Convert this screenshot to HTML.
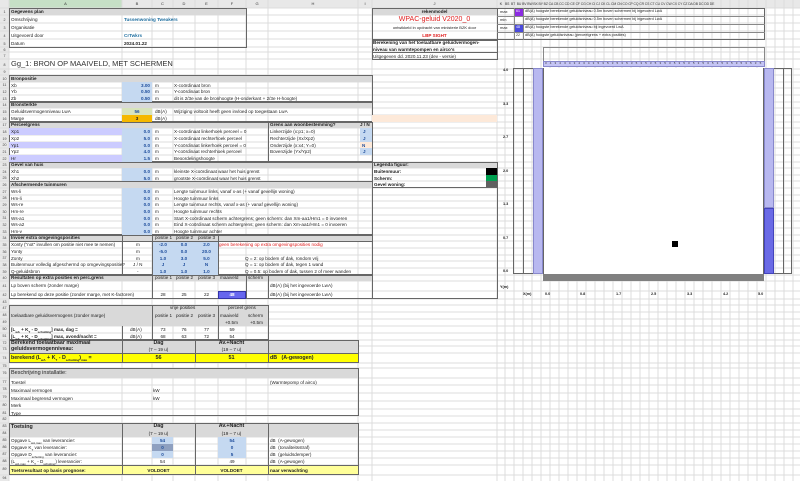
<!DOCTYPE html>
<html><head><meta charset="utf-8"><style>
*{margin:0;padding:0;box-sizing:border-box}
body{width:800px;height:481px;overflow:hidden;background:#fff;font-family:"Liberation Sans",sans-serif;font-size:4.6px;color:#222;position:relative}
i,b,u{position:absolute;font-style:normal;white-space:nowrap;text-decoration:none;line-height:7px;height:7px}
b{font-weight:bold}
.d{position:absolute}
.hd{background:#d9d9d9}
.bl{background:#c5d9f1}
.v{color:#1f4e9c;font-weight:bold;text-align:right}
.bx{position:absolute;border:1px solid #666}
.rn{position:absolute;left:0;width:9px;text-align:center;font-size:3.6px;color:#444;line-height:6px}
.ch{position:absolute;top:0;height:8px;line-height:8px;font-size:4px;text-align:center;color:#333}
</style></head><body>
<svg width="800" height="481" style="position:absolute;left:0;top:0" shape-rendering="crispEdges">
<rect x="0" y="0" width="800" height="8" fill="#e8e8e8"/>
<rect x="0" y="0" width="9" height="481" fill="#e8e8e8"/>
<rect x="9" y="0" width="113" height="8" fill="#c6e0c6"/>
<g stroke="#dcdcdc" stroke-width="1">
<path d="M0 8H800M0 15H800M0 23H800M0 31H800M0 39H800M0 47H800M0 52H800M0 59H800M0 69H800M0 75H800M0 82H800M0 88H800M0 95H800M0 102H800M0 108H800M0 115H800M0 122H800M0 128H800M0 135H800M0 142H800M0 148H800M0 155H800M0 162H800M0 168H800M0 175H800M0 181H800M0 188H800M0 195H800M0 201H800M0 208H800M0 215H800M0 221H800M0 228H800M0 235H800M0 241H800M0 248H800M0 255H800M0 261H800M0 268H800M0 275H800M0 281H800M0 291H800M0 299H800M0 305H800M0 312H800M0 319H800M0 326H800M0 333H800M0 340H800M0 346H800M0 353H800M0 363H800M0 368H800M0 378H800M0 385H800M0 393H800M0 401H800M0 409H800M0 416H800M0 423H800M0 430H800M0 437H800M0 444H800M0 451H800M0 458H800M0 465H800M0 475H800"/>
<path d="M9 0V481M122 0V481M152 0V481M173 0V481M195 0V481M218 0V481M246 0V481M268 0V481M358 0V481M372 0V481M497 0V481M505 0V481M514 0V481M523 0V481M532 0V481M541 0V481M550 0V481M559 0V481M568 0V481M577 0V481M586 0V481M595 0V481M604 0V481M613 0V481M622 0V481M631 0V481M640 0V481M649 0V481M658 0V481M667 0V481M676 0V481M685 0V481M694 0V481M703 0V481M712 0V481M721 0V481M730 0V481M739 0V481M748 0V481M757 0V481M766 0V481M775 0V481M784 0V481M793 0V481"/>
</g>
</svg>
<!-- column headers -->
<span class="ch" style="left:9px;width:113px">A</span><span class="ch" style="left:122px;width:30px">B</span><span class="ch" style="left:152px;width:21px">C</span><span class="ch" style="left:173px;width:22px">D</span><span class="ch" style="left:195px;width:23px">E</span><span class="ch" style="left:218px;width:28px">F</span><span class="ch" style="left:246px;width:22px">G</span><span class="ch" style="left:268px;width:90px">H</span><span class="ch" style="left:358px;width:14px">I</span><span class="ch" style="left:372px;width:125px">J</span><span class="ch" style="left:497px;width:8px">K</span>
<span class="ch" style="left:505px;width:295px;text-align:left;font-size:3.4px;letter-spacing:-0.1px">BS &nbsp;BT &nbsp;BU BV BW BX BY BZ CA CB CC CD CE CF CG CH CI CJ CK CL CM CN CO CP CQ CR CS CT CU CV CW CX CY CZ DA DB DC DD DE</span>
<!-- row numbers -->
<span class="rn" style="top:9px">1</span><span class="rn" style="top:17px">2</span><span class="rn" style="top:25px">3</span><span class="rn" style="top:33px">4</span><span class="rn" style="top:41px">5</span><span class="rn" style="top:47px">6</span><span class="rn" style="top:53px">7</span><span class="rn" style="top:62px">8</span><span class="rn" style="top:69px">9</span><span class="rn" style="top:76px">10</span><span class="rn" style="top:82px">11</span><span class="rn" style="top:89px">12</span><span class="rn" style="top:96px">13</span><span class="rn" style="top:102px">14</span><span class="rn" style="top:109px">15</span><span class="rn" style="top:116px">16</span><span class="rn" style="top:122px">17</span><span class="rn" style="top:129px">18</span><span class="rn" style="top:136px">19</span><span class="rn" style="top:142px">20</span><span class="rn" style="top:149px">21</span><span class="rn" style="top:156px">22</span><span class="rn" style="top:162px">23</span><span class="rn" style="top:169px">24</span><span class="rn" style="top:175px">25</span><span class="rn" style="top:182px">26</span><span class="rn" style="top:189px">27</span><span class="rn" style="top:195px">28</span><span class="rn" style="top:202px">29</span><span class="rn" style="top:209px">30</span><span class="rn" style="top:215px">31</span><span class="rn" style="top:222px">32</span><span class="rn" style="top:229px">33</span><span class="rn" style="top:235px">34</span><span class="rn" style="top:242px">35</span><span class="rn" style="top:249px">36</span><span class="rn" style="top:255px">37</span><span class="rn" style="top:262px">38</span><span class="rn" style="top:269px">39</span><span class="rn" style="top:275px">40</span><span class="rn" style="top:283px">41</span><span class="rn" style="top:292px">42</span><span class="rn" style="top:299px">43</span><span class="rn" style="top:305px">47</span><span class="rn" style="top:312px">48</span><span class="rn" style="top:319px">49</span><span class="rn" style="top:326px">50</span><span class="rn" style="top:333px">51</span><span class="rn" style="top:340px">72</span><span class="rn" style="top:346px">73</span><span class="rn" style="top:355px">74</span><span class="rn" style="top:363px">75</span><span class="rn" style="top:370px">76</span><span class="rn" style="top:379px">77</span><span class="rn" style="top:386px">78</span><span class="rn" style="top:394px">79</span><span class="rn" style="top:402px">80</span><span class="rn" style="top:410px">81</span><span class="rn" style="top:416px">82</span><span class="rn" style="top:423px">83</span><span class="rn" style="top:430px">84</span><span class="rn" style="top:437px">85</span><span class="rn" style="top:444px">86</span><span class="rn" style="top:451px">87</span><span class="rn" style="top:458px">88</span><span class="rn" style="top:466px">89</span><span class="rn" style="top:475px">94</span>

<!-- Gegevens plan -->
<div class="d hd" style="left:9px;top:8px;width:237px;height:7px"></div>
<div class="bx" style="left:9px;top:8px;width:238px;height:40px"></div>
<b style="left:11px;top:8px">Gegevens plan</b>
<i style="left:11px;top:16px">Omschrijving</i><b style="left:124px;top:16px;color:#1f6fa0">Tussenwoning Tweakers</b>
<i style="left:11px;top:24px">Organisatie</i>
<i style="left:11px;top:32px">Uitgevoerd door</i><b style="left:124px;top:32px;color:#1f6fa0">CrTwkrs</b>
<i style="left:11px;top:40px">Datum</i><b style="left:124px;top:40px">2024.01.22</b>
<i style="left:11px;top:59px;height:10px;line-height:10px;font-size:7.5px;color:#333">Gg_1: BRON OP MAAIVELD, MET SCHERMEN</i>

<!-- Bronpositie -->
<div class="d hd" style="left:9px;top:75px;width:363px;height:7px"></div>
<div class="bx" style="left:9px;top:75px;width:364px;height:27px"></div>
<b style="left:11px;top:75px">Bronpositie</b>
<div class="d bl" style="left:122px;top:82px;width:30px;height:20px"></div>
<i style="left:11px;top:82px">Xb</i><b class="v" style="left:122px;width:28px;top:82px">3.00</b><i style="left:155px;top:82px">m</i><i style="left:174px;top:82px">X-coördinaat bron</i>
<i style="left:11px;top:88px">Yb</i><b class="v" style="left:122px;width:28px;top:88px">0.50</b><i style="left:155px;top:88px">m</i><i style="left:174px;top:88px">Y-coördinaat bron</i>
<i style="left:11px;top:95px">Zb</i><b class="v" style="left:122px;width:28px;top:95px">0.50</b><i style="left:155px;top:95px">m</i><i style="left:174px;top:95px">dit is 2/3e van de bronhoogte (H-onderkant + 2/3e H-hoogte)</i>

<!-- Bronsterkte -->
<div class="d hd" style="left:9px;top:102px;width:363px;height:6px"></div>
<div class="bx" style="left:9px;top:102px;width:364px;height:20px"></div>
<b style="left:11px;top:101px">Bronsterkte</b>
<div class="d" style="left:122px;top:108px;width:30px;height:7px;background:#d8e4bc"></div>
<div class="d" style="left:122px;top:115px;width:30px;height:7px;background:#f5b800"></div>
<div class="d" style="left:372px;top:115px;width:125px;height:7px;background:#fde9d9"></div>
<i style="left:11px;top:108px">Geluidsvermogenniveau LwA</i><b style="left:122px;width:30px;top:108px;text-align:center;color:#1f4e9c">56</b><i style="left:155px;top:108px">dB(A)</i><i style="left:174px;top:108px">Wijziging voltooit heeft geen invloed op toegestaan LwA</i>
<i style="left:11px;top:115px">Marge</i><b style="left:122px;width:30px;top:115px;text-align:center">3</b><i style="left:155px;top:115px">dB(A)</i>

<!-- Perceelgrens -->
<div class="d hd" style="left:9px;top:122px;width:259px;height:6px"></div>
<div class="d hd" style="left:268px;top:122px;width:104px;height:6px"></div>
<div class="bx" style="left:9px;top:122px;width:364px;height:40px"></div>
<div class="bx" style="left:268px;top:122px;width:105px;height:40px"></div>
<b style="left:11px;top:121px">Perceelgrens</b><b style="left:270px;top:121px">Grens aan woonbestemming?</b><b style="left:360px;top:121px">J / N</b>
<div class="d" style="left:9px;top:128px;width:113px;height:7px;background:#ccccff"></div>
<div class="d" style="left:9px;top:142px;width:113px;height:6px;background:#ccccff"></div>
<div class="d" style="left:9px;top:155px;width:113px;height:7px;background:#ccccff"></div>
<div class="d bl" style="left:122px;top:128px;width:30px;height:34px"></div>
<div class="d bl" style="left:360px;top:128px;width:12px;height:7px"></div>
<div class="d bl" style="left:360px;top:135px;width:12px;height:7px"></div>
<div class="d" style="left:360px;top:142px;width:12px;height:6px;background:#fde9d9"></div>
<div class="d bl" style="left:360px;top:148px;width:12px;height:7px"></div>
<i style="left:11px;top:128px">Xp1</i><b class="v" style="left:122px;width:28px;top:128px">0.0</b><i style="left:155px;top:128px">m</i><i style="left:174px;top:128px">X-coördinaat linkerhoek perceel = 0</i><i style="left:270px;top:128px">Linkerzijde (x:p1; x=0)</i><b style="left:363px;top:128px;color:#1f4e9c">J</b>
<i style="left:11px;top:135px">Xp2</i><b class="v" style="left:122px;width:28px;top:135px">5.0</b><i style="left:155px;top:135px">m</i><i style="left:174px;top:135px">X-coördinaat rechterhoek perceel</i><i style="left:270px;top:135px">Rechterzijde (Xx/Xp2)</i><b style="left:363px;top:135px;color:#1f4e9c">J</b>
<i style="left:11px;top:142px">Yp1</i><b class="v" style="left:122px;width:28px;top:142px">0.0</b><i style="left:155px;top:142px">m</i><i style="left:174px;top:142px">Y-coördinaat linkerhoek perceel = 0</i><i style="left:270px;top:142px">Onderzijde (x:x4; Y=0)</i><b style="left:362px;top:142px;color:#1f4e9c">N</b>
<i style="left:11px;top:148px">Yp2</i><b class="v" style="left:122px;width:28px;top:148px">4.0</b><i style="left:155px;top:148px">m</i><i style="left:174px;top:148px">Y-coördinaat rechterhoek perceel</i><i style="left:270px;top:148px">Bovenzijde (Yx/Yp2)</i><b style="left:363px;top:148px;color:#1f4e9c">J</b>
<i style="left:11px;top:155px">Hr</i><b class="v" style="left:122px;width:28px;top:155px">1.5</b><i style="left:155px;top:155px">m</i><i style="left:174px;top:155px">Beoordelingshoogte</i>

<!-- Gevel van huis -->
<div class="d hd" style="left:9px;top:162px;width:363px;height:6px"></div>
<div class="bx" style="left:9px;top:162px;width:364px;height:20px"></div>
<b style="left:11px;top:161px">Gevel van huis</b>
<div class="d bl" style="left:122px;top:168px;width:30px;height:13px"></div>
<i style="left:11px;top:168px">Xh1</i><b class="v" style="left:122px;width:28px;top:168px">0.0</b><i style="left:155px;top:168px">m</i><i style="left:174px;top:168px">kleinste X-coördinaat waar het huis grenst</i>
<i style="left:11px;top:175px">Xh2</i><b class="v" style="left:122px;width:28px;top:175px">5.0</b><i style="left:155px;top:175px">m</i><i style="left:174px;top:175px">grootste X-coördinaat waar het huis grenst</i>

<!-- Afschermende tuinmuren -->
<div class="d hd" style="left:9px;top:181px;width:363px;height:7px"></div>
<div class="bx" style="left:9px;top:181px;width:364px;height:54px"></div>
<b style="left:11px;top:181px">Afschermende tuinmuren</b>
<div class="d bl" style="left:122px;top:188px;width:30px;height:47px"></div>
<i style="left:11px;top:188px">Ws-li</i><b class="v" style="left:122px;width:28px;top:188px">0.0</b><i style="left:155px;top:188px">m</i><i style="left:174px;top:188px">Lengte tuinmuur links, vanaf x-as (+ vanaf gevellijn woning)</i>
<i style="left:11px;top:195px">Hm-li</i><b class="v" style="left:122px;width:28px;top:195px">0.0</b><i style="left:155px;top:195px">m</i><i style="left:174px;top:195px">Hoogte tuinmuur links</i>
<i style="left:11px;top:201px">Ws-re</i><b class="v" style="left:122px;width:28px;top:201px">0.0</b><i style="left:155px;top:201px">m</i><i style="left:174px;top:201px">Lengte tuinmuur rechts, vanaf x-as (+ vanaf gevellijn woning)</i>
<i style="left:11px;top:208px">Hm-re</i><b class="v" style="left:122px;width:28px;top:208px">0.0</b><i style="left:155px;top:208px">m</i><i style="left:174px;top:208px">Hoogte tuinmuur rechts</i>
<i style="left:11px;top:215px">Ws-a1</i><b class="v" style="left:122px;width:28px;top:215px">0.0</b><i style="left:155px;top:215px">m</i><i style="left:174px;top:215px">Start X-coördinaat scherm achtergrens; geen scherm: dan Xm-aa1/Hm1 = 0 invoeren</i>
<i style="left:11px;top:221px">Ws-a2</i><b class="v" style="left:122px;width:28px;top:221px">0.0</b><i style="left:155px;top:221px">m</i><i style="left:174px;top:221px">Eind X-coördinaat scherm achtergrens; geen scherm: dan Xm-aa1/Hm1 = 0 invoeren</i>
<i style="left:11px;top:228px">Hm-v</i><b class="v" style="left:122px;width:28px;top:228px">0.0</b><i style="left:155px;top:228px">m</i><i style="left:174px;top:228px">Hoogte tuinmuur achter</i>

<!-- Invoer extra omgevingsposities -->
<div class="d hd" style="left:9px;top:235px;width:363px;height:6px"></div>
<div class="bx" style="left:9px;top:235px;width:364px;height:40px"></div>
<div class="d" style="left:122px;top:235px;width:1px;height:40px;background:#666"></div>
<div class="d" style="left:152px;top:235px;width:1px;height:40px;background:#666"></div>
<div class="d" style="left:218px;top:235px;width:1px;height:40px;background:#666"></div>
<div class="d" style="left:9px;top:241px;width:364px;height:1px;background:#666"></div>
<b style="left:11px;top:234px">Invoer extra omgevingsposities</b>
<i style="left:155px;top:234px">positie 1</i><i style="left:176px;top:234px">positie 2</i><i style="left:198px;top:234px">positie 3</i>
<div class="d bl" style="left:153px;top:242px;width:65px;height:33px"></div>
<i style="left:11px;top:241px">Xonty ("not" invullen om positie niet mee te nemen)</i><i style="left:136px;top:241px">m</i><b style="left:153px;width:20px;top:241px;text-align:center;color:#1f4e9c">-2.0</b><b style="left:173px;width:22px;top:241px;text-align:center;color:#1f4e9c">0.0</b><b style="left:195px;width:23px;top:241px;text-align:center;color:#1f4e9c">2.0</b><i style="left:219px;top:241px;color:#e02020">geen berekening op extra omgevingsposities nodig</i>
<i style="left:11px;top:248px">Yonty</i><i style="left:136px;top:248px">m</i><b style="left:153px;width:20px;top:248px;text-align:center;color:#1f4e9c">-5.0</b><b style="left:173px;width:22px;top:248px;text-align:center;color:#1f4e9c">0.0</b><b style="left:195px;width:23px;top:248px;text-align:center;color:#1f4e9c">20.0</b>
<i style="left:11px;top:255px">Zonty</i><i style="left:136px;top:255px">m</i><b style="left:153px;width:20px;top:255px;text-align:center;color:#1f4e9c">1.0</b><b style="left:173px;width:22px;top:255px;text-align:center;color:#1f4e9c">3.0</b><b style="left:195px;width:23px;top:255px;text-align:center;color:#1f4e9c">5.0</b><i style="left:245px;top:255px">Q = 2: op bodem of dak, rondom vrij</i>
<i style="left:11px;top:261px">Buitenmuur volledig afgeschermd op omgevingspositie?</i><i style="left:133px;top:261px">J / N</i><b style="left:153px;width:20px;top:261px;text-align:center;color:#1f4e9c">J</b><b style="left:173px;width:22px;top:261px;text-align:center;color:#1f4e9c">J</b><b style="left:195px;width:23px;top:261px;text-align:center;color:#1f4e9c">N</b><i style="left:245px;top:261px">Q = 1: op bodem of dak, tegen 1 wand</i>
<i style="left:11px;top:268px">Q-geluidsbron</i><i style="left:137px;top:268px">-</i><b style="left:153px;width:20px;top:268px;text-align:center;color:#1f4e9c">1.0</b><b style="left:173px;width:22px;top:268px;text-align:center;color:#1f4e9c">1.0</b><b style="left:195px;width:23px;top:268px;text-align:center;color:#1f4e9c">1.0</b><i style="left:245px;top:268px">Q = 0.5: op bodem of dak, tussen 2 of meer wanden</i>

<!-- Resultaten -->
<div class="d hd" style="left:9px;top:275px;width:363px;height:6px"></div>
<div class="bx" style="left:9px;top:275px;width:364px;height:24px"></div>
<div class="d" style="left:152px;top:275px;width:1px;height:24px;background:#666"></div>
<div class="d" style="left:246px;top:275px;width:1px;height:24px;background:#666"></div>
<div class="d" style="left:268px;top:275px;width:1px;height:24px;background:#666"></div>
<b style="left:11px;top:274px">Resultaten op extra posities en perc.grens</b>
<i style="left:155px;top:274px">positie 1</i><i style="left:176px;top:274px">positie 2</i><i style="left:198px;top:274px">positie 3</i><i style="left:220px;top:274px">maaiveld</i><i style="left:248px;top:274px">scherm</i>
<i style="left:11px;top:282px">Lp boven scherm (zonder marge)</i><i style="left:270px;top:282px">dB(A) (bij het ingevoerde LwA)</i>
<div class="d" style="left:218px;top:291px;width:28px;height:8px;background:#6666ee;border:1px solid #3333aa"></div>
<i style="left:11px;top:291px;line-height:8px">Lp berekend op deze positie (zonder marge, met K-factoren)</i><i style="left:153px;width:20px;top:291px;text-align:center;line-height:8px">28</i><i style="left:173px;width:22px;top:291px;text-align:center;line-height:8px">25</i><i style="left:195px;width:23px;top:291px;text-align:center;line-height:8px">22</i><b style="left:218px;width:28px;top:291px;text-align:center;line-height:8px;color:#fff">48</b><i style="left:270px;top:291px;line-height:8px">dB(A) (bij het ingevoerde LwA)</i>

<!-- Toelaatbaar -->
<div class="d hd" style="left:9px;top:305px;width:259px;height:21px"></div>
<div class="bx" style="left:9px;top:305px;width:260px;height:35px"></div>
<div class="d" style="left:152px;top:305px;width:1px;height:35px;background:#666"></div>
<div class="d" style="left:218px;top:305px;width:1px;height:35px;background:#666"></div>
<div class="d" style="left:122px;top:326px;width:1px;height:14px;background:#666"></div>
<i style="left:170px;top:304px">vrije posities</i><i style="left:228px;top:304px">perceel grens</i>
<i style="left:11px;top:312px">toelaatbare geluidsvermogens (zonder marge)</i>
<i style="left:155px;top:312px">positie 1</i><i style="left:176px;top:312px">positie 2</i><i style="left:198px;top:312px">positie 3</i><i style="left:220px;top:312px">maaiveld</i><i style="left:248px;top:312px">scherm</i>
<i style="left:225px;top:319px">+0.5m</i><i style="left:250px;top:319px">+0.5m</i>
<b style="left:11px;top:326px">[L<sub style="font-size:3px">wA</sub> + K<sub style="font-size:3px">T</sub> - D<sub style="font-size:3px">schutting</sub>] max, dag =</b><i style="left:130px;top:326px">dB(A)</i><i style="left:153px;width:20px;top:326px;text-align:center">73</i><i style="left:173px;width:22px;top:326px;text-align:center">76</i><i style="left:195px;width:23px;top:326px;text-align:center">77</i><i style="left:218px;width:28px;top:326px;text-align:center">59</i>
<b style="left:11px;top:333px">[L<sub style="font-size:3px">wA</sub> + K<sub style="font-size:3px">T</sub> - D<sub style="font-size:3px">schutting</sub>] max, avond/nacht =</b><i style="left:130px;top:333px">dB(A)</i><i style="left:153px;width:20px;top:333px;text-align:center">68</i><i style="left:173px;width:22px;top:333px;text-align:center">63</i><i style="left:195px;width:23px;top:333px;text-align:center">72</i><i style="left:218px;width:28px;top:333px;text-align:center">54</i>

<!-- Berekend toelaatbaar -->
<div class="d hd" style="left:9px;top:340px;width:349px;height:13px"></div>
<div class="d" style="left:9px;top:353px;width:349px;height:10px;background:#ffff00"></div>
<div class="bx" style="left:9px;top:340px;width:350px;height:23px"></div>
<div class="d" style="left:122px;top:340px;width:1px;height:23px;background:#666"></div>
<div class="d" style="left:195px;top:340px;width:1px;height:23px;background:#666"></div>
<div class="d" style="left:268px;top:340px;width:1px;height:23px;background:#666"></div>
<div class="d" style="left:9px;top:353px;width:350px;height:1px;background:#666"></div>
<b style="left:11px;top:340px;font-size:5.3px">Berekend toelaatbaar maximaal</b><b style="left:11px;top:346px;font-size:5.3px">geluidsvermogenniveau:</b>
<b style="left:122px;width:73px;top:340px;text-align:center;font-size:5.3px">Dag</b><i style="left:122px;width:73px;top:346px;text-align:center">(7 – 19 u)</i>
<b style="left:195px;width:73px;top:340px;text-align:center;font-size:5.3px">Av.+Nacht</b><i style="left:195px;width:73px;top:346px;text-align:center">(19 – 7 u)</i>
<b style="left:11px;top:354px;line-height:9px;font-size:5.3px">berekend (L<sub style="font-size:3px">wA</sub> + K<sub style="font-size:3px">T</sub> - D<sub style="font-size:3px">schutting</sub>)<sub style="font-size:3px">max</sub> =</b><b style="left:122px;width:73px;top:354px;text-align:center;line-height:9px;font-size:5.5px">56</b><b style="left:195px;width:73px;top:354px;text-align:center;line-height:9px;font-size:5.5px">51</b><b style="left:270px;top:354px;line-height:9px;font-size:5.3px">dB &nbsp; (A-gewogen)</b>

<!-- Beschrijving installatie -->
<div class="d hd" style="left:9px;top:368px;width:349px;height:10px"></div>
<div class="bx" style="left:9px;top:368px;width:350px;height:48px"></div>
<i style="left:11px;top:369px;font-size:5.5px;line-height:9px">Beschrijving installatie:</i>
<i style="left:11px;top:379px">Toestel</i><i style="left:270px;top:379px">(Warmtepomp of airco)</i>
<i style="left:11px;top:387px">Maximaal vermogen</i><i style="left:153px;top:387px">kW</i>
<i style="left:11px;top:395px">Maximaal begrensd vermogen</i><i style="left:153px;top:395px">kW</i>
<i style="left:11px;top:402px">Merk</i>
<i style="left:11px;top:410px">Type</i>

<!-- Toetsing -->
<div class="d hd" style="left:9px;top:423px;width:349px;height:14px"></div>
<div class="d" style="left:9px;top:465px;width:349px;height:10px;background:#ffff99"></div>
<div class="bx" style="left:9px;top:423px;width:350px;height:52px"></div>
<div class="d" style="left:122px;top:423px;width:1px;height:52px;background:#666"></div>
<div class="d" style="left:195px;top:423px;width:1px;height:52px;background:#666"></div>
<div class="d" style="left:268px;top:423px;width:1px;height:52px;background:#666"></div>
<div class="d" style="left:9px;top:465px;width:350px;height:1px;background:#666"></div>
<b style="left:11px;top:424px;font-size:5.3px">Toetsing</b>
<b style="left:122px;width:73px;top:423px;text-align:center;font-size:5.3px">Dag</b><i style="left:122px;width:73px;top:430px;text-align:center">(7 – 19 u)</i>
<b style="left:195px;width:73px;top:423px;text-align:center;font-size:5.3px">Av.+Nacht</b><i style="left:195px;width:73px;top:430px;text-align:center">(19 – 7 u)</i>
<div class="d bl" style="left:152px;top:437px;width:21px;height:21px"></div>
<div class="d" style="left:152px;top:444px;width:21px;height:7px;background:#8ea0c0"></div>
<div class="d bl" style="left:218px;top:437px;width:28px;height:21px"></div>
<i style="left:11px;top:437px">Opgave L<sub style="font-size:3px">wA,max</sub> van leverancier:</i><b style="left:152px;width:21px;top:437px;text-align:center;color:#1f4e9c">54</b><b style="left:218px;width:28px;top:437px;text-align:center;color:#1f4e9c">54</b><i style="left:270px;top:437px">dB &nbsp;(A-gewogen)</i>
<i style="left:11px;top:444px">Opgave K<sub style="font-size:3px">T</sub> van leverancier:</i><b style="left:152px;width:21px;top:444px;text-align:center;color:#1f4e9c">0</b><b style="left:218px;width:28px;top:444px;text-align:center;color:#1f4e9c">0</b><i style="left:270px;top:444px">dB &nbsp;(tonaliteitsstraf)</i>
<i style="left:11px;top:451px">Opgave D<sub style="font-size:3px">schutting</sub> van leverancier:</i><b style="left:152px;width:21px;top:451px;text-align:center;color:#1f4e9c">0</b><b style="left:218px;width:28px;top:451px;text-align:center;color:#1f4e9c">5</b><i style="left:270px;top:451px">dB &nbsp;(geluidsdemper)</i>
<i style="left:11px;top:458px">(L<sub style="font-size:3px">wA,max</sub> + K<sub style="font-size:3px">T</sub> - D<sub style="font-size:3px">schutting</sub>) leverancier:</i><i style="left:152px;width:21px;top:458px;text-align:center">54</i><i style="left:218px;width:28px;top:458px;text-align:center">49</i><i style="left:270px;top:458px">dB &nbsp;(A-gewogen)</i>
<b style="left:11px;top:466px;line-height:9px">Toetsresultaat op basis prognose:</b><b style="left:122px;width:73px;top:466px;text-align:center;line-height:9px">VOLDOET</b><b style="left:195px;width:73px;top:466px;text-align:center;line-height:9px">VOLDOET</b><b style="left:270px;top:466px;line-height:9px">naar verwachting</b>

<!-- J column top box -->
<div class="d hd" style="left:372px;top:8px;width:125px;height:7px"></div>
<div class="bx" style="left:372px;top:8px;width:126px;height:32px"></div>
<b style="left:372px;width:125px;top:8px;text-align:center">rekenmodel</b>
<i style="left:372px;width:125px;top:15px;height:9px;line-height:9px;text-align:center;color:#e02020;font-size:7px">WPAC-geluid V2020_0</i>
<i style="left:372px;width:125px;top:24px;text-align:center;font-size:4px">ontwikkeld in opdracht van ministerie BZK door</i>
<b style="left:372px;width:125px;top:32px;text-align:center;color:#e02020">LBP SIGHT</b>
<div class="bx" style="left:372px;top:40px;width:126px;height:20px"></div>
<div class="d" style="left:372px;top:52px;width:126px;height:1px;background:#666"></div>
<b style="left:373px;top:39px">Berekening van het toelaatbare geluidvermogen-</b>
<b style="left:373px;top:46px">niveau van warmtepompen en airco's</b>
<i style="left:373px;top:53px">Uitgegeven dd. 2020.11.23 (dev - versie)</i>

<!-- legend -->
<div class="d hd" style="left:372px;top:162px;width:125px;height:6px"></div>
<div class="bx" style="left:372px;top:162px;width:126px;height:26px"></div>
<b style="left:374px;top:161px">Legenda figuur:</b>
<b style="left:374px;top:168px">Buitenmuur:</b><div class="d" style="left:486px;top:168px;width:11px;height:7px;background:#000"></div>
<b style="left:374px;top:175px">Scherm:</b><div class="d" style="left:486px;top:175px;width:11px;height:6px;background:#00a050"></div>
<b style="left:374px;top:181px">Gevel woning:</b><div class="d" style="left:486px;top:181px;width:11px;height:6px;background:#606060"></div>
<div class="d" style="left:372px;top:188px;width:126px;height:111px;border-left:1px solid #666;border-right:1px solid #666;border-bottom:1px solid #666"></div>

<!-- right top table -->
<div class="bx" style="left:497px;top:8px;width:268px;height:32px"></div>
<div class="d" style="left:497px;top:16px;width:268px;height:1px;background:#888"></div>
<div class="d" style="left:497px;top:24px;width:268px;height:1px;background:#888"></div>
<div class="d" style="left:497px;top:32px;width:268px;height:1px;background:#888"></div>
<div class="d" style="left:514px;top:8px;width:1px;height:32px;background:#888"></div>
<div class="d" style="left:523px;top:8px;width:1px;height:32px;background:#888"></div>
<div class="d" style="left:515px;top:9px;width:8px;height:7px;background:#8b2be2"></div>
<div class="d" style="left:515px;top:25px;width:8px;height:7px;background:#4b4bdd"></div>
<i style="left:500px;top:8px;font-size:4px">max</i><i style="left:500px;top:16px;font-size:4px">min</i><i style="left:500px;top:24px;font-size:4px">max</i>
<i style="left:516px;top:8px;font-size:3.5px;color:#fff">61</i><i style="left:516px;top:24px;font-size:3.5px;color:#fff">48</i><i style="left:516px;top:32px;font-size:3.5px">22</i>
<i style="left:525px;top:8px;font-size:3.8px">dB(A) hoogste berekende geluidsniveau 0.5m boven schermen bij ingevoerd LwA</i>
<i style="left:525px;top:16px;font-size:3.8px">dB(A) hoogste berekende geluidsniveau 0.5m boven schermen bij ingevoerd LwA</i>
<i style="left:525px;top:24px;font-size:3.8px">dB(A) hoogste berekende geluidsniveau bij ingevoerd LwA</i>
<i style="left:525px;top:32px;font-size:3.8px">dB(A) hoogste geluidsniveau (perceelgrens + extra posities)</i>

<!-- chart -->
<div class="bx" style="left:543px;top:47px;width:222px;height:15px;border-color:#888"></div>
<div class="d" style="left:543px;top:61px;width:222px;height:6px;background:#c4c4f4;border:1px solid #8888cc"></div>
<i style="left:545px;top:60px;font-size:3px;letter-spacing:3.1px;color:#333">3434343434353535353535353535353535353535353535</i>
<div class="bx" style="left:513px;top:68px;width:279px;height:206px;border-color:#666"></div>
<div class="d" style="left:523px;top:68px;width:1px;height:206px;background:#666"></div>
<div class="d" style="left:533px;top:68px;width:10px;height:206px;background:#b8b8f0;border:1px solid #8888cc"></div>
<div class="d" style="left:543px;top:68px;width:221px;height:206px;background:#fff;border-left:1px solid #666;border-right:1px solid #666"></div>
<div class="d" style="left:764px;top:68px;width:10px;height:140px;background:#b8b8f0;border:1px solid #8888cc"></div>
<div class="d" style="left:764px;top:208px;width:10px;height:66px;background:#6a6ae6;border:1px solid #4444bb"></div>
<div class="d" style="left:783px;top:68px;width:1px;height:206px;background:#666"></div>
<div class="d" style="left:543px;top:274px;width:221px;height:7px;background:#808080"></div>
<div class="d" style="left:672px;top:241px;width:6px;height:6px;background:#000"></div>
<b style="left:503px;top:67px;font-size:3.8px">4.0</b><b style="left:503px;top:101px;font-size:3.8px">3.3</b><b style="left:503px;top:134px;font-size:3.8px">2.7</b><b style="left:503px;top:168px;font-size:3.8px">2.0</b><b style="left:503px;top:201px;font-size:3.8px">1.3</b><b style="left:503px;top:235px;font-size:3.8px">0.7</b><b style="left:503px;top:268px;font-size:3.8px">0.0</b>
<b style="left:500px;top:284px;font-size:3.8px">Y(m)</b>
<b style="left:523px;top:291px;font-size:3.8px">X(m)</b><b style="left:545px;top:291px;font-size:3.8px">0.0</b><b style="left:580px;top:291px;font-size:3.8px">0.8</b><b style="left:616px;top:291px;font-size:3.8px">1.7</b><b style="left:651px;top:291px;font-size:3.8px">2.5</b><b style="left:687px;top:291px;font-size:3.8px">3.3</b><b style="left:723px;top:291px;font-size:3.8px">4.2</b><b style="left:758px;top:291px;font-size:3.8px">5.0</b>
</body></html>
